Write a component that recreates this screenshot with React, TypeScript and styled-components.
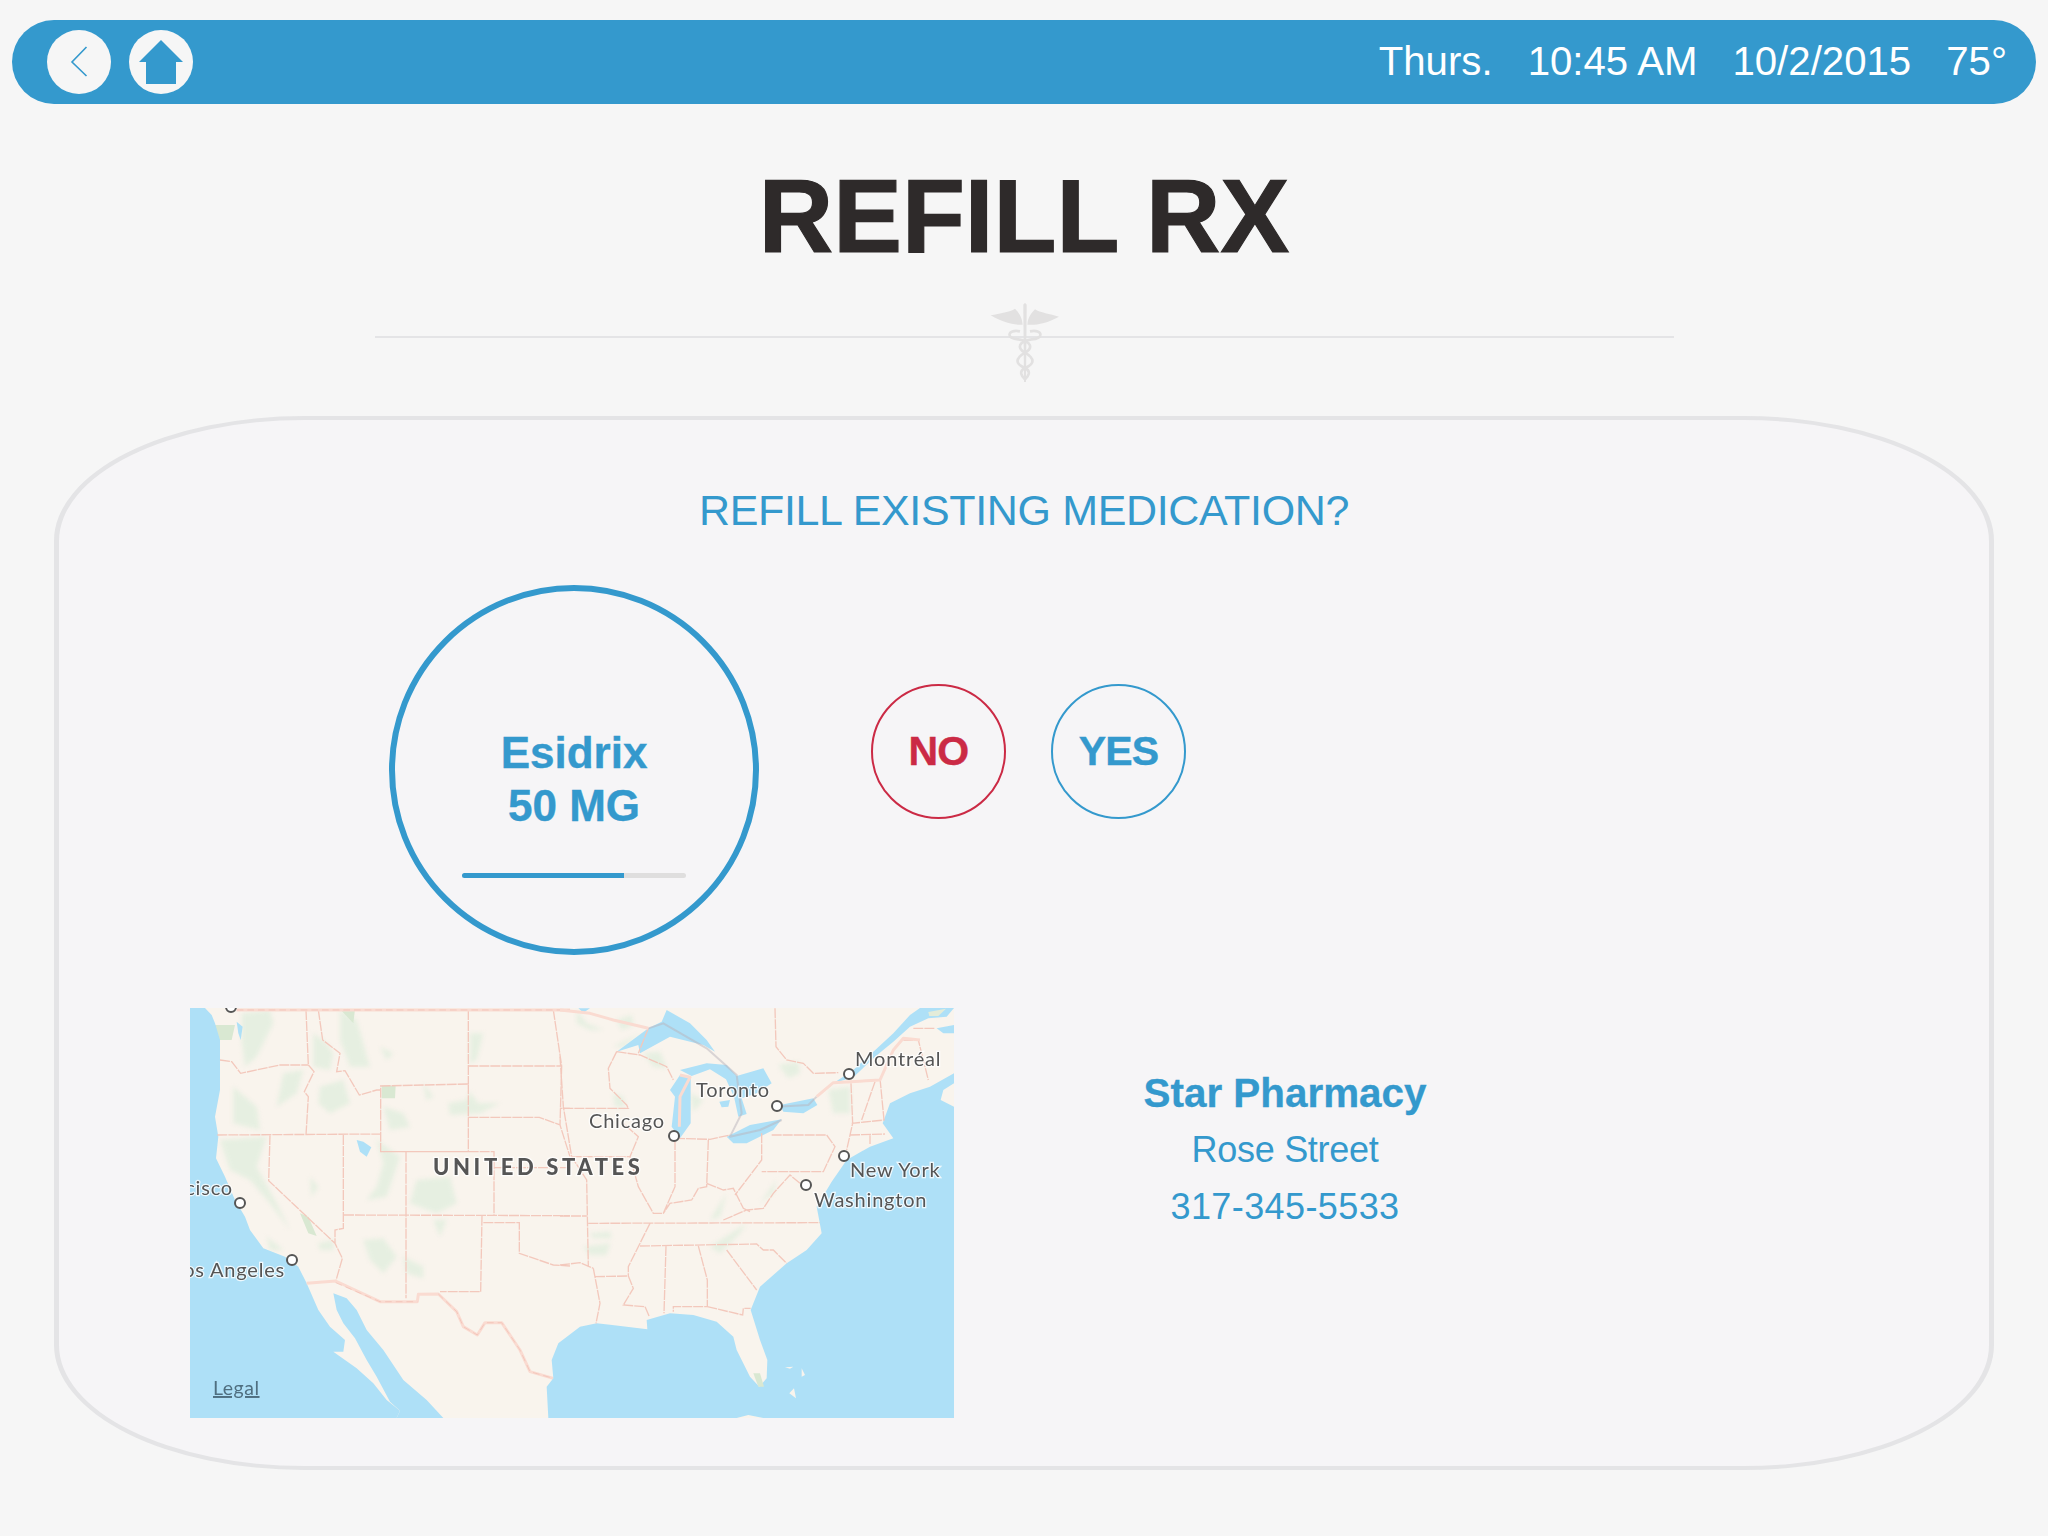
import React from 'react';
import styled, { createGlobalStyle } from 'styled-components';

const blue = '#3499cd';
const red = '#cb2a45';
const line = '#e4e4e6';
const water = '#aee0f7';
const land = '#f9f4ed';
const border = '#f3c8bc';

const GlobalStyle = createGlobalStyle`
  html, body {
    margin: 0;
    padding: 0;
    background: #f6f6f6;
    font-family: "Liberation Sans", Arial, sans-serif;
  }
`;

const Page = styled.div`
  width: 2048px;
  height: 1536px;
  padding: 20px 12px 0;
  box-sizing: border-box;
  overflow: hidden;
`;

const TopBar = styled.header`
  display: flex;
  align-items: center;
  justify-content: space-between;
  height: 84px;
  padding: 0 29px 0 35px;
  border-radius: 42px;
  background: ${blue};
`;

const NavGroup = styled.div`
  display: flex;
  gap: 18px;
`;

const NavButton = styled.button`
  display: flex;
  align-items: center;
  justify-content: center;
  width: 64px;
  height: 64px;
  padding: 0;
  border: 0;
  border-radius: 50%;
  background: #f6f6f6;
`;

const StatusGroup = styled.div`
  display: flex;
  gap: 35px;
  font-size: 40.2px;
  line-height: 48px;
  color: #fff;
`;

const Title = styled.h1`
  margin: 54px 0 0;
  font-size: 103px;
  line-height: 118px;
  font-weight: 700;
  text-align: center;
  -webkit-text-stroke: 1.2px #2e2a2a;
  color: #2e2a2a;
`;

const DividerRow = styled.div`
  display: flex;
  align-items: center;
  justify-content: center;
  position: relative;
  width: 1299px;
  height: 80px;
  margin: 26px auto 0 363px;
  &::before {
    content: '';
    position: absolute;
    left: 0;
    right: 0;
    top: 34px;
    height: 2px;
    background: ${line};
  }
`;

const CaduceusIcon = styled.svg`
  position: relative;
  width: 70px;
  height: 80px;
`;

const Card = styled.section`
  width: 1940px;
  height: 1054px;
  margin: 34px 0 0 42px;
  padding-top: 64px;
  box-sizing: border-box;
  border: solid ${line};
  border-width: 4px 5px;
  border-radius: 250px / 125px;
  background: #f6f5f7;
`;

const Question = styled.h2`
  margin: 0;
  font-size: 43px;
  line-height: 52px;
  font-weight: 400;
  text-align: center;
  letter-spacing: -0.35px;
  color: ${blue};
`;

const RefillRow = styled.div`
  display: flex;
  align-items: flex-start;
  margin: 49px 0 0 330px;
`;

const DoseCircle = styled.div`
  display: flex;
  flex-direction: column;
  align-items: center;
  width: 370px;
  height: 370px;
  padding-top: 135px;
  box-sizing: border-box;
  border: 6px solid ${blue};
  border-radius: 50%;
`;

const DoseName = styled.div`
  font-size: 44px;
  line-height: 53px;
  font-weight: 700;
  text-align: center;
  -webkit-text-stroke: 0.4px ${blue};
  color: ${blue};
`;

const Progress = styled.div`
  width: 224px;
  height: 5px;
  margin-top: 41px;
  border-radius: 3px;
  background: #dfdede;
  overflow: hidden;
`;

const ProgressFill = styled.div`
  height: 100%;
  background: ${blue};
`;

const Choices = styled.div`
  display: flex;
  gap: 45px;
  margin: 99px 0 0 112px;
`;

const ChoiceButton = styled.button<{ $color: string }>`
  width: 135px;
  height: 135px;
  padding: 0;
  border: 2px solid ${(props) => props.$color};
  border-radius: 50%;
  background: transparent;
  font-family: inherit;
  font-size: 41px;
  font-weight: 700;
  letter-spacing: -0.8px;
  -webkit-text-stroke: 0.4px ${(props) => props.$color};
  color: ${(props) => props.$color};
`;

const PharmacyRow = styled.div`
  display: flex;
  align-items: flex-start;
  margin: 53px 0 0 131px;
`;

const MapFrame = styled.svg`
  display: block;
  flex: none;
  width: 764px;
  height: 410px;
`;

const SoftLayer = styled.g<{ $radius: number }>`
  filter: blur(${(props) => props.$radius}px);
`;

const MapLabel = styled.text<{ $bold?: boolean; $size?: number }>`
  font-family: Lato, "Open Sans", sans-serif;
  font-size: ${(props) => props.$size || 20}px;
  font-weight: ${(props) => (props.$bold ? 900 : 400)};
  letter-spacing: ${(props) => (props.$bold ? 3.6 : 0.8)}px;
  fill: #555;
  stroke: #fff;
  stroke-width: 2.5px;
  stroke-opacity: 0.8;
  paint-order: stroke;
`;

const LegalLabel = styled.text`
  font-family: Lato, "Open Sans", sans-serif;
  font-size: 19.5px;
  letter-spacing: 0.5px;
  text-decoration: underline;
  fill: #4f6f80;
`;

const PharmacyInfo = styled.div`
  width: 500px;
  margin: 62px 0 0 81px;
  text-align: center;
  color: ${blue};
`;

const PharmacyName = styled.div`
  font-size: 40.4px;
  line-height: 46px;
  font-weight: 700;
  -webkit-text-stroke: 0.3px ${blue};
`;

const PharmacyLine = styled.div<{ $tracking: number }>`
  margin-top: 10px;
  font-size: 36px;
  line-height: 47px;
  letter-spacing: ${(props) => props.$tracking}px;
`;

const pins = [
  [41, -1], [50, 195], [102, 252], [484, 128], [587, 98], [659, 66], [654, 148], [616, 177],
];

const labels = [
  { text: 'Montréal', x: 665, y: 58 },
  { text: 'Toronto', x: 506, y: 89 },
  { text: 'Chicago', x: 399, y: 120 },
  { text: 'New York', x: 660, y: 169 },
  { text: 'Washington', x: 624, y: 199 },
  { text: 'San Francisco', x: 43, y: 187, end: true },
  { text: 'Los Angeles', x: 95, y: 269, end: true },
];

// west half is traced in crop units (3x, crop origin 170,990), east half likewise from 560,990
const westBorders = [
  'M150 210L185 215L212 250L330 225L415 225',
  'M408 60L415 225L432 245L403 305L415 320L408 435',
  'M445 60L458 150L510 190L500 245L525 242L568 315L620 300L632 300',
  'M632 288L895 282L895 485L632 485Z',
  'M142 435L632 432',
  'M300 435L296 572L495 760',
  'M520 435L520 715L495 720L495 760L517 805L497 875',
  'M708 485L708 925',
  'M632 485L972 485L972 675',
  'M522 675L1200 677',
  'M936 677L932 905L810 905',
  'M940 698L1048 698L1048 790L1150 825L1200 828',
  'M895 60L895 282',
  'M895 228L1172 228',
  'M1150 60L1175 228L1170 405L1200 500',
  'M895 382L1108 382L1170 405',
  'M972 533L1200 533',
  'M1178 355L1200 355',
];

const eastBorders = [
  'M170 185L145 235L150 295L200 345L205 355L0 355',
  'M345 450L345 590L310 670L280 670L235 590L210 500L235 440L190 400',
  'M35 500L210 500',
  'M0 200L10 350L35 500L80 570L85 830',
  'M445 450L440 590L415 595L395 630L330 640L310 670',
  'M440 580L490 600L520 595L550 655L570 665',
  'M605 430L605 510L525 615',
  'M635 435L800 435L825 470L790 545L605 545',
  'M0 678L80 678',
  'M85 700L780 698',
  'M270 700L205 830L205 860',
  'M240 768L590 762L610 780L640 780L680 820',
  'M318 768L312 970',
  'M415 768L442 870L442 950L340 950L340 965',
  'M442 950L548 975L550 955L572 955',
  'M500 780L590 900',
  'M105 860L205 858L220 895L190 945L255 950L268 980',
  'M100 835L120 940L108 1000',
  'M0 825L60 818L100 835',
  'M873 280L878 400L860 480',
  'M945 275L905 390',
  'M960 265L972 390L875 400',
  'M870 435L975 432',
  'M930 432L930 465',
  'M645 55L648 170L680 210L730 220L760 250L835 248',
  'M490 690L560 660L610 655L640 610L690 555L720 580',
  'M345 445L450 448L510 435',
  'M1030 150L1075 150L1105 270',
  'M1060 115L1125 115',
  'M170 185L240 195L320 230L340 270',
  'M265 115L235 190',
];

const WestMap = () => (
  <g transform="translate(-20,-18) scale(0.33333)">
    <SoftLayer $radius={6}>
      <path fill="#e6efe1" d="M215 70L300 60L310 100L260 200L225 230L215 150ZM430 130L470 160L490 190L480 240L430 230ZM510 60L560 90L600 230L540 230L510 150ZM630 170L670 190L650 210ZM340 250L400 240L380 310L320 350ZM190 290L260 350L270 420L190 400ZM450 290L520 270L540 340L480 370L445 340ZM640 350L700 370L720 410L660 420ZM760 280L790 320L770 330ZM900 130L940 130L920 210L900 220ZM835 340L890 330L900 305L925 340L990 340L930 370L840 375ZM150 450L290 440L260 530L320 640L360 720L300 640L240 570L180 540ZM420 560L445 590L425 620ZM590 630L620 590L640 520L620 450L690 500L650 620ZM740 570L840 560L860 640L800 670L720 640ZM790 690L830 690L810 740ZM580 750L640 745L680 800L640 850L600 810ZM700 800L760 830L760 865L710 850ZM290 740L340 780L300 780ZM445 760L490 750L490 780L450 780Z" />
    </SoftLayer>
    <SoftLayer $radius={2}>
      <path fill="#d9e8d2" d="M130 105L195 105L185 150L145 150ZM635 287L677 287L675 325L635 325ZM390 670L415 680L440 738L415 730ZM510 58L555 58L550 100Z" />
    </SoftLayer>
    <path fill={water} d="M60 54L105 54L125 75L135 100L150 150L150 215L150 300L135 380L145 440L138 505L165 560L195 630L225 680L240 720L280 775L345 800L385 830L410 880L445 960L480 1010L525 1050L520 1085L490 1085L560 1135L610 1180L650 1230L690 1262L680 1284L60 1284Z" />
    <path fill={water} d="M490 910L530 925L560 960L590 1020L640 1080L700 1170L770 1230L820 1284L680 1284L690 1262L660 1235L620 1160L590 1110L555 1045L520 1000L500 960Z" />
    <path fill={water} d="M200 95L218 110L212 150L205 130ZM560 450L580 455L604 472L590 500L570 485Z" />
    <path fill="none" stroke={border} strokeWidth="4" strokeDasharray="30 3" d={westBorders.join('')} />
    <path fill="none" stroke="#fadbd1" strokeWidth="9" strokeLinejoin="round" d="M200 60L1200 60M410 880L497 873L630 935L742 935L745 913L805 912L860 965L880 1010L922 1035L945 998L995 998L1050 1080L1080 1145L1150 1165" />
    <path fill="none" stroke="#f0bdb0" strokeWidth="2" strokeDasharray="20 12" d="M200 60L1200 60M497 878L630 935L742 935M805 912L860 965L880 1010L922 1035L945 998L995 998L1050 1080L1080 1145L1150 1165" />
  </g>
);

const EastMap = () => (
  <g transform="translate(370,-18) scale(0.33333)">
    <SoftLayer $radius={6}>
      <path fill="#e6efe1" d="M50 60L80 100L130 120L90 120L50 100ZM170 90L215 75L220 105L185 120ZM160 170L240 130L190 170ZM250 190L300 185L320 235L280 230ZM160 310L190 320L195 350L165 350ZM390 310L430 330L400 365ZM655 225L715 215L720 250L685 265ZM805 300L870 290L870 370L820 370ZM90 730L150 725L155 745L100 745ZM70 770L150 760L140 795L90 795ZM450 690L500 610L480 680ZM450 770L560 700L540 730L480 790ZM600 640L650 570L640 610ZM1105 60L1158 55L1130 80Z" />
    </SoftLayer>
    <path fill={water} d="M1182 250L1110 290L1050 310L990 340L968 400L1000 445L930 470L860 510L815 575L770 650L785 730L740 780L680 820L600 890L572 960L600 1050L622 1110L620 1165L598 1190L570 1160L530 1080L520 1040L470 995L400 975L330 970L260 990L262 1018L200 1010L110 1000L60 1010L-5 1060L-25 1110L-20 1165L-40 1190L-35 1284L1182 1284Z" />
    <path fill="#d9e8d2" d="M580 1150L600 1150L612 1190L595 1190Z" />
    <path fill={land} d="M1182 280L1150 300L1142 330L1182 350ZM530 1284L565 1275L610 1284ZM688 1210L702 1195L708 1225ZM675 1132L700 1130L690 1136ZM725 1135L735 1155L725 1160Z" />
    <path fill={water} d="M170 185L265 115L305 95L320 60L390 100L440 150L465 185L430 165L330 140L240 190L235 165ZM330 300L360 255L392 262L392 400L360 445L335 410L345 320ZM360 240L440 220L500 225L530 258L610 235L635 280L590 310L545 325L560 372L535 380L522 320L498 268L450 238L395 258ZM478 335L510 330L505 350L485 352ZM500 440L570 405L665 388L640 420L560 460L520 460ZM660 345L760 325L772 345L730 370L670 365ZM820 280L880 240L940 185L1000 130L1050 75L1080 54L1182 54L1160 80L1105 85L1050 110L1000 155L945 200L880 262ZM1130 115L1182 105L1182 130L1150 130ZM55 55L90 55L70 68Z" />
    <path fill="#e3ecd9" d="M1105 66L1158 56L1135 78L1108 78Z" />
    <path fill="none" stroke={border} strokeWidth="4" strokeDasharray="30 3" d={eastBorders.join('')} />
    <path fill="none" stroke="#b9b3bb" strokeOpacity="0.5" strokeWidth="6" strokeLinejoin="round" d="M265 115L310 100L440 175L530 255L545 370L510 440L600 420L665 390M650 350L745 345L770 320" />
    <path fill="none" stroke="#fadbd1" strokeWidth="9" strokeLinejoin="round" d="M0 60L90 70L160 90L265 115M770 320L820 278L960 270L1000 180L1030 145L1080 150M360 255L390 262L360 320L358 410" />
  </g>
);

const App = () => (
  <Page>
    <GlobalStyle />
    <TopBar>
      <NavGroup>
        <NavButton aria-label="Back">
          <svg width="64" height="64" viewBox="0 0 64 64">
            <path d="M39.5 17L25 32L39.5 46" fill="none" stroke={blue} strokeWidth="1.6" />
          </svg>
        </NavButton>
        <NavButton aria-label="Home">
          <svg width="64" height="64" viewBox="0 0 64 64">
            <path d="M32 10L54 32H47V54H17V32H10Z" fill={blue} />
          </svg>
        </NavButton>
      </NavGroup>
      <StatusGroup>
        <span>Thurs.</span>
        <span>10:45 AM</span>
        <span>10/2/2015</span>
        <span>75°</span>
      </StatusGroup>
    </TopBar>
    <Title>REFILL RX</Title>
    <DividerRow>
      <CaduceusIcon viewBox="0 0 210 240">
        <g fill="#e2e1e1">
          <path d="M100 8Q105 0 110 8L110 30L108 240H102L100 30Z" />
          <path d="M98 68C70 70 40 62 2 40C30 34 60 30 75 20C88 34 96 46 98 68Z" />
          <path d="M112 68C140 70 170 64 207 44C180 36 150 32 135 22C122 36 114 46 112 68Z" />
        </g>
        <g fill="none" stroke="#e2e1e1" strokeWidth="8">
          <path d="M90 88C50 80 48 112 85 112C125 118 130 138 105 152C75 170 75 186 105 198C125 208 115 222 105 232" />
          <path d="M120 88C160 80 162 112 125 112C85 118 80 138 105 152C135 170 135 186 105 198C85 208 95 222 105 232" />
        </g>
      </CaduceusIcon>
    </DividerRow>
    <Card>
      <Question>REFILL EXISTING MEDICATION?</Question>
      <RefillRow>
        <DoseCircle>
          <DoseName>Esidrix<br />50 MG</DoseName>
          <Progress>
            <ProgressFill style={{ width: `${(162 / 224) * 100}%` }} />
          </Progress>
        </DoseCircle>
        <Choices>
          <ChoiceButton $color={red}>NO</ChoiceButton>
          <ChoiceButton $color={blue}>YES</ChoiceButton>
        </Choices>
      </RefillRow>
      <PharmacyRow>
        <MapFrame viewBox="0 0 764 410">
          <rect width="764" height="410" fill={land} />
          <SoftLayer $radius={0.4}>
            <WestMap />
            <EastMap />
            {pins.map(([x, y]) => (
              <circle key={`${x}-${y}`} cx={x} cy={y} r="5" fill="#fff" stroke="#555" strokeWidth="2" />
            ))}
            {labels.map((label) => (
              <MapLabel key={label.text} x={label.x} y={label.y} textAnchor={label.end ? 'end' : 'start'}>
                {label.text}
              </MapLabel>
            ))}
            <MapLabel x={243} y={167} $bold $size={22}>UNITED STATES</MapLabel>
            <LegalLabel x={23} y={387}>Legal</LegalLabel>
          </SoftLayer>
        </MapFrame>
        <PharmacyInfo>
          <PharmacyName>Star Pharmacy</PharmacyName>
          <PharmacyLine $tracking={-0.3}>Rose Street</PharmacyLine>
          <PharmacyLine $tracking={0.4}>317-345-5533</PharmacyLine>
        </PharmacyInfo>
      </PharmacyRow>
    </Card>
  </Page>
);

export default App;
